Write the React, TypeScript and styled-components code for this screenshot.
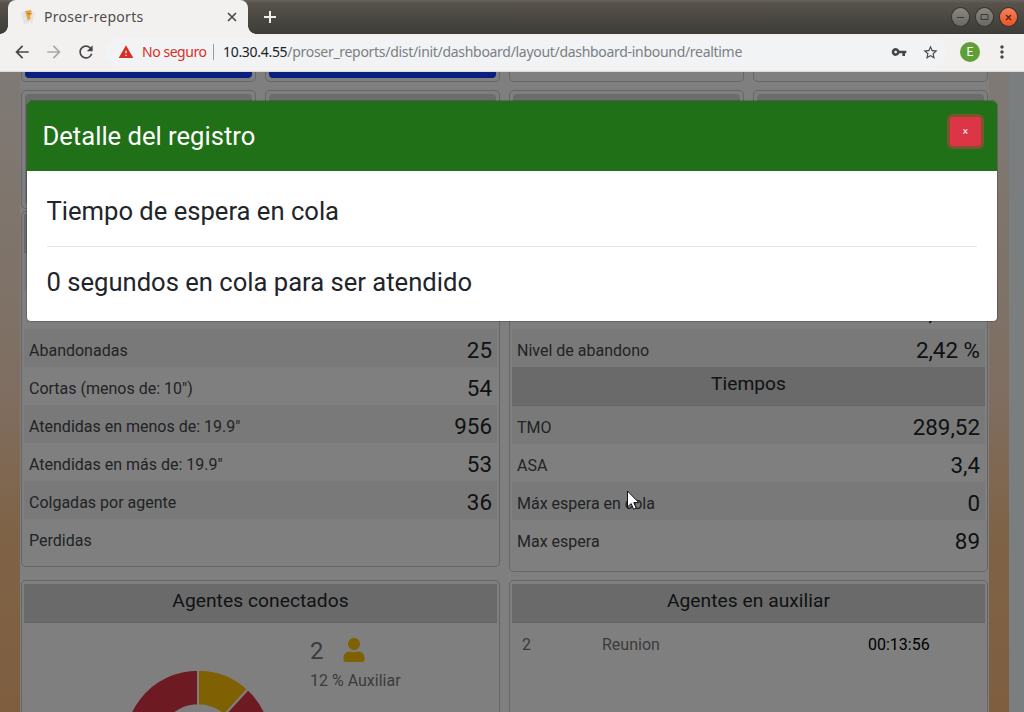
import React from "react";
import styled, { createGlobalStyle } from "styled-components";
import {
  MdArrowBack,
  MdArrowForward,
  MdRefresh,
  MdWarning,
  MdVpnKey,
  MdStarBorder,
  MdMoreVert,
} from "react-icons/md";
import { FaUser } from "react-icons/fa";

const GlobalStyle = createGlobalStyle`
  * { box-sizing: border-box; }
  body { margin: 0; font-family: Roboto, "Liberation Sans", sans-serif; color: #212529; }
`;

const Window = styled.div`
  width: 1024px;
  height: 712px;
  display: flex;
  flex-direction: column;
  overflow: hidden;
`;

/* ---------- browser chrome ---------- */

const TabStrip = styled.div`
  height: 34px;
  flex: none;
  display: flex;
  align-items: center;
  padding: 0 7px 0 8px;
  background: linear-gradient(#68625b 0, #57534b 3px, #3d3c37 100%);
`;

const Tab = styled.div`
  position: relative;
  width: 240px;
  height: 34px;
  display: flex;
  align-items: center;
  padding: 0 9px 0 13px;
  border-radius: 8px 8px 0 0;
  background: #f2f1f0;

  &::before,
  &::after {
    content: "";
    position: absolute;
    bottom: 0;
    width: 8px;
    height: 8px;
  }
  &::before {
    left: -8px;
    background: radial-gradient(circle at 0 0, transparent 7.5px, #f2f1f0 8px);
  }
  &::after {
    right: -8px;
    background: radial-gradient(circle at 100% 0, transparent 7.5px, #f2f1f0 8px);
  }
`;

const TabTitle = styled.span`
  flex: 1;
  margin-left: 8px;
  padding-bottom: 2px;
  font: 14px "Noto Sans", sans-serif;
  letter-spacing: 0.3px;
  color: #4c4c4c;
`;

const NewTab = styled.div`
  flex: 1;
  display: flex;
  padding-left: 15px;
`;

const WindowButtons = styled.div`
  display: flex;
  gap: 7px;
`;

const WindowButton = styled.div<{ $close?: boolean }>`
  width: 17px;
  height: 18px;
  display: grid;
  place-items: center;
  border-radius: 50%;
  background: ${(p) =>
    p.$close ? "linear-gradient(#f58259, #ec5225)" : "linear-gradient(#89877f, #6b6963)"};
  box-shadow: 0 0 0 1px #35342f;
`;

const Toolbar = styled.div`
  height: 38px;
  flex: none;
  display: flex;
  align-items: center;
  padding-bottom: 1px;
  background: #f2f1f0;
  border-bottom: 1px solid #dcdbd9;
  color: #46474a;
`;

const NavButtons = styled.div`
  display: flex;
  gap: 12px;
  padding: 0 0 0 12px;
`;

const AddressBar = styled.div`
  height: 28px;
  flex: none;
  width: 841px;
  margin-left: 10px;
  display: flex;
  align-items: center;
  padding: 0 8px 0 12px;
  border-radius: 14px;
  background: #f1f3f4;
  font: 14px "Noto Sans", sans-serif;
`;

const Warning = styled.span`
  width: 64px;
  margin-left: 8px;
  padding-bottom: 1px;
  white-space: nowrap;
  letter-spacing: -0.45px;
  color: #d93025;
`;

const Divider = styled.span`
  width: 1px;
  height: 16px;
  margin: 0 9px 0 7px;
  background: #9a9da0;
`;

const Url = styled.span`
  flex: 1;
  padding-bottom: 1px;
  white-space: nowrap;
  letter-spacing: -0.3px;
  color: #7b7f84;
`;

const UrlHost = styled.span`
  color: #202124;
`;

const AddressIcons = styled.span`
  display: flex;
  align-items: center;
  gap: 15px;
`;

const Avatar = styled.div`
  width: 20px;
  height: 20px;
  flex: none;
  margin: 0 12px 0 13px;
  display: grid;
  place-items: center;
  border-radius: 50%;
  background: #5f9f35;
  color: #fff;
  font-size: 12px;
`;

/* ---------- dashboard ---------- */

const Viewport = styled.div`
  position: relative;
  flex: 1;
  min-height: 0;
  display: flex;
  overflow: hidden;
`;

const Page = styled.div`
  flex: 1;
  padding: 0 20px;
  background: linear-gradient(#fff4ec 0, #ffe9d6 25%, #ffdcc2 50%, #ffc68e 72%, #ffbc80 100%);
`;

const ScrollTrack = styled.div`
  width: 15px;
  background: #f6fcfd;
`;

const Content = styled.div`
  height: 100%;
  padding: 0 1px;
  background: #fff;
  display: flex;
  flex-direction: column;
`;

const CardRow = styled.div<{ $columns: number; $gap: number; $top?: number }>`
  display: grid;
  grid-template-columns: repeat(${(p) => p.$columns}, 1fr);
  align-items: start;
  column-gap: 9px;
  margin-top: ${(p) => p.$top ?? 0}px;
  margin-bottom: ${(p) => p.$gap}px;
`;

const Card = styled.div<{ $height: number; $padTop?: number }>`
  height: ${(p) => p.$height}px;
  display: flex;
  flex-direction: column;
  padding: ${(p) => p.$padTop ?? 3}px 2px 3px;
  border: 1px solid rgba(0, 0, 0, 0.2);
  border-radius: 5px;
  background: #fff;
`;

const CounterBar = styled.div<{ $color: string }>`
  flex: 1;
  margin: 0 1px;
  border-radius: 4px;
  background: ${(p) => p.$color};
`;

const CardHeader = styled.div`
  height: 39px;
  flex: none;
  padding-top: 4px;
  border-bottom: 1px solid #c8c8c8;
  background: #d5d5d5;
  text-align: center;
  font-size: 19.2px;
  line-height: 26px;
  letter-spacing: 0.05px;
`;

const StatRow = styled.div<{ $striped: boolean }>`
  height: 38px;
  flex: none;
  display: flex;
  align-items: center;
  justify-content: space-between;
  padding: 4px 5px 0;
  background: ${(p) => (p.$striped ? "#f2f2f2" : "#fff")};
`;

const StatLabel = styled.span`
  font-size: 16px;
  color: #43474b;
`;

const StatValue = styled.span`
  margin-left: auto;
  font-size: 22.4px;
`;

const AgentsBody = styled.div`
  flex: 1;
  display: flex;
`;

const Chart = styled.svg`
  flex: none;
  width: 286px;
  height: 200px;
`;

const AgentSummary = styled.div`
  padding-top: 13px;
  color: #777;
`;

const AgentCount = styled.div`
  display: flex;
  align-items: center;
  gap: 18.5px;
  height: 30px;
  font-size: 24px;

  svg {
    margin-bottom: 2px;
  }
`;

const AgentShare = styled.div`
  margin-top: 5px;
  font-size: 16px;
`;

const AuxRow = styled.div`
  display: grid;
  grid-template-columns: 80px 1fr 117px;
  padding: 12px 0 0 10px;
  font-size: 16px;
  line-height: 20px;
  color: #777;
`;

const AuxTime = styled.span`
  color: #000;
`;

/* ---------- modal ---------- */

const Backdrop = styled.div`
  position: absolute;
  inset: 0;
  padding: 29px 27px 0;
  background: rgba(0, 0, 0, 0.5);
`;

const Modal = styled.div`
  height: 220px;
  display: flex;
  flex-direction: column;
  border-radius: 4px;
  overflow: hidden;
  background: #fff;
  box-shadow: 0 0 0 1px rgba(0, 0, 0, 0.2);
`;

const ModalHeader = styled.div`
  height: 70px;
  flex: none;
  display: flex;
  justify-content: space-between;
  padding: 15px 16px 0 15.5px;
  background: #1f7017;
  color: #fff;
`;

const ModalTitle = styled.div`
  font-size: 25.6px;
  line-height: 40px;
`;

const CloseButton = styled.button`
  width: 31px;
  height: 29px;
  margin-top: 1px;
  padding: 0;
  border: 0;
  border-radius: 3px;
  background: #dc3545;
  box-shadow: 0 0 0 3px rgba(220, 53, 69, 0.5);
  color: #fff;
  font: 10px/29px Roboto, sans-serif;
`;

const ModalBody = styled.div`
  padding: 20px 20px 0 19.5px;
`;

const ModalLine = styled.div`
  font-size: 25.6px;
  line-height: 40px;
`;

const Rule = styled.hr`
  margin: 15px 0;
  border: 0;
  border-top: 1px solid #e5e5e5;
`;

const Pointer = styled.svg`
  position: absolute;
  left: 626px;
  top: 418px;
`;

type Stat = { label?: string; value?: string };

const calls: Stat[] = [
  {},
  {},
  { label: "Abandonadas", value: "25" },
  { label: 'Cortas (menos de: 10")', value: "54" },
  { label: 'Atendidas en menos de: 19.9"', value: "956" },
  { label: 'Atendidas en más de: 19.9"', value: "53" },
  { label: "Colgadas por agente", value: "36" },
  { label: "Perdidas" },
];

const levels: Stat[] = [
  {},
  { value: "97,58 %" },
  { label: "Nivel de abandono", value: "2,42 %" },
];

const times: Stat[] = [
  { label: "TMO", value: "289,52" },
  { label: "ASA", value: "3,4" },
  { label: "Máx espera en cola", value: "0" },
  { label: "Max espera", value: "89" },
];

function Stats({ items }: { items: Stat[] }) {
  return (
    <>
      {items.map((s, i) => (
        <StatRow key={i} $striped={i % 2 === 0}>
          {s.label && <StatLabel>{s.label}</StatLabel>}
          {s.value && <StatValue>{s.value}</StatValue>}
        </StatRow>
      ))}
    </>
  );
}

function Donut() {
  const cx = 174;
  const cy = 120.8;
  const outer = 74;
  const inner = 38.6;
  const at = (deg: number, r: number) => {
    const a = (deg * Math.PI) / 180;
    return `${cx + r * Math.sin(a)} ${cy - r * Math.cos(a)}`;
  };
  const slice = (from: number, to: number) => {
    const large = to - from > 180 ? 1 : 0;
    return `M${at(from, outer)}A${outer} ${outer} 0 ${large} 1 ${at(to, outer)}L${at(to, inner)}A${inner} ${inner} 0 ${large} 0 ${at(from, inner)}Z`;
  };
  return (
    <Chart viewBox="0 0 286 200">
      <path d={slice(0, 42.5)} fill="#ffc107" stroke="#fff" strokeWidth="2" />
      <path d={slice(42.5, 360)} fill="#dc3545" stroke="#fff" strokeWidth="2" />
    </Chart>
  );
}

export default function App() {
  return (
    <Window>
      <GlobalStyle />
      <TabStrip>
        <Tab>
          <svg width="15" height="16" viewBox="0 0 15 16">
            <path d="M0 4l4-2 4 12-5 1z" fill="#dfe3ea" />
            <path d="M8 12l4-10 2 1-3 12z" fill="#e6e4e2" />
            <path d="M4 2l6-1 1 4-2 2 1 2-3 3z" fill="#e9a53a" />
            <path d="M6 4l3 0-1 2z" fill="#a8701e" />
          </svg>
          <TabTitle>Proser-reports</TabTitle>
          <svg width="14" height="14" viewBox="0 0 14 14" stroke="#4a4a4a" strokeWidth="1.7">
            <path d="M3 3l8 8M11 3l-8 8" />
          </svg>
        </Tab>
        <NewTab>
          <svg width="14" height="14" viewBox="0 0 14 14" stroke="#eeeeec" strokeWidth="2">
            <path d="M7 1v12M1 7h12" />
          </svg>
        </NewTab>
        <WindowButtons>
          <WindowButton>
            <svg width="9" height="9" viewBox="0 0 9 9" stroke="#3a3935" fill="none">
              <path d="M1 4.5h7" />
            </svg>
          </WindowButton>
          <WindowButton>
            <svg width="9" height="9" viewBox="0 0 9 9" stroke="#3a3935" fill="none">
              <path d="M1 1.5h7v5h-7z" />
            </svg>
          </WindowButton>
          <WindowButton $close>
            <svg width="9" height="9" viewBox="0 0 9 9" stroke="#5a2412" strokeWidth="1.4" fill="none">
              <path d="M2 2l5 5M7 2l-5 5" />
            </svg>
          </WindowButton>
        </WindowButtons>
      </TabStrip>
      <Toolbar>
        <NavButtons>
          <MdArrowBack size={20} />
          <MdArrowForward size={20} color="#a9a9a9" />
          <MdRefresh size={20} />
        </NavButtons>
        <AddressBar>
          <MdWarning size={16} color="#d93025" />
          <Warning>No seguro</Warning>
          <Divider />
          <Url>
            <UrlHost>10.30.4.55</UrlHost>/proser_reports/dist/init/dashboard/layout/dashboard-inbound/realtime
          </Url>
          <AddressIcons>
            <MdVpnKey size={16} />
            <MdStarBorder size={17} />
          </AddressIcons>
        </AddressBar>
        <Avatar>E</Avatar>
        <MdMoreVert size={20} />
      </Toolbar>
      <Viewport>
        <Page>
          <Content>
            <CardRow $columns={4} $gap={8} $top={-30}>
              <Card $height={40}><CounterBar $color="#143cff" /></Card>
              <Card $height={40}><CounterBar $color="#143cff" /></Card>
              <Card $height={40} />
              <Card $height={40} />
            </CardRow>
            <CardRow $columns={4} $gap={2}>
              <Card $height={119}><CounterBar $color="#d8d8d8" /></Card>
              <Card $height={119}><CounterBar $color="#d8d8d8" /></Card>
              <Card $height={119}><CounterBar $color="#d8d8d8" /></Card>
              <Card $height={119}><CounterBar $color="#d8d8d8" /></Card>
            </CardRow>
            <CardRow $columns={2} $gap={8}>
              <Card $height={356} $padTop={2}>
                <CardHeader />
                <Stats items={calls} />
              </Card>
              <Card $height={361} $padTop={2}>
                <CardHeader />
                <Stats items={levels} />
                <CardHeader>Tiempos</CardHeader>
                <Stats items={times} />
              </Card>
            </CardRow>
            <CardRow $columns={2} $gap={0}>
              <Card $height={250}>
                <CardHeader>Agentes conectados</CardHeader>
                <AgentsBody>
                  <Donut />
                  <AgentSummary>
                    <AgentCount>
                      2 <FaUser size={24} color="#ffc107" />
                    </AgentCount>
                    <AgentShare>12 % Auxiliar</AgentShare>
                  </AgentSummary>
                </AgentsBody>
              </Card>
              <Card $height={250}>
                <CardHeader>Agentes en auxiliar</CardHeader>
                <AuxRow>
                  <span>2</span>
                  <span>Reunion</span>
                  <AuxTime>00:13:56</AuxTime>
                </AuxRow>
              </Card>
            </CardRow>
          </Content>
        </Page>
        <ScrollTrack />
        <Backdrop>
          <Modal>
            <ModalHeader>
              <ModalTitle>Detalle del registro</ModalTitle>
              <CloseButton>×</CloseButton>
            </ModalHeader>
            <ModalBody>
              <ModalLine>Tiempo de espera en cola</ModalLine>
              <Rule />
              <ModalLine>0 segundos en cola para ser atendido</ModalLine>
            </ModalBody>
          </Modal>
        </Backdrop>
        <Pointer width="14" height="22" viewBox="0 0 14 22">
          <path
            d="M1.5 1v16l3.7-3.4 2.4 5.6 2.6-1.1-2.4-5.5h5z"
            fill="#fff"
            stroke="#111"
            strokeWidth="1"
          />
        </Pointer>
      </Viewport>
    </Window>
  );
}
